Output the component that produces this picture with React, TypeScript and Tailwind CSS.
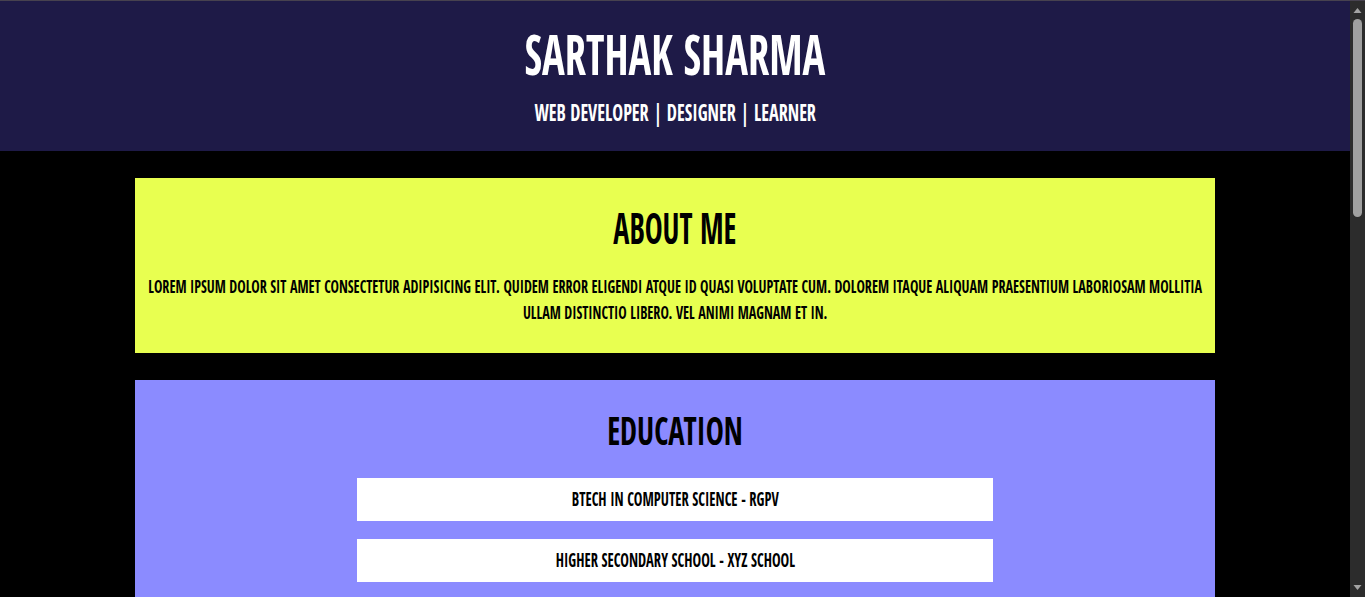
function Heading({ children, size, scale }: { children: string; size: string; scale: string }) {
  return (
    <h2 className={`${size} leading-none`}>
      <span className={`inline-block ${scale}`}>{children}</span>
    </h2>
  );
}

function Item({ children }: { children: string }) {
  return (
    <div className="mx-auto flex h-[43px] w-3/5 items-center justify-center bg-white text-[19px] leading-none">
      <span className="inline-block scale-x-[0.765]">{children}</span>
    </div>
  );
}

function Scrollbar() {
  return (
    <div className="flex w-[15px] shrink-0 flex-col items-center bg-[#2c2c2c]">
      <svg width="9" height="17" viewBox="0 0 9 17" className="shrink-0">
        <path d="M0.5 12 L4.5 7 L8.5 12 Z" fill="#a3a3a3" />
      </svg>
      <div className="mt-[1px] h-[198px] w-[9px] rounded-full bg-[#a0a0a0]" />
      <div className="flex-1" />
      <svg width="9" height="17" viewBox="0 0 9 17" className="shrink-0">
        <path d="M0.5 5 L4.5 10 L8.5 5 Z" fill="#a3a3a3" />
      </svg>
    </div>
  );
}

export default function App() {
  return (
    <div className="flex h-screen border-t border-[#47424f] bg-black font-['Open_Sans_Condensed','Open_Sans',sans-serif] font-bold">
      <div className="min-w-0 flex-1 overflow-y-auto [scrollbar-width:none]">
        <header className="bg-[#1e1a47] pt-[24px] pb-[27px] text-center text-white">
          <h1 className="text-[56px] leading-none">
            <span className="inline-block scale-x-[0.76]">SARTHAK SHARMA</span>
          </h1>
          <p className="mt-[20px] text-[23px] leading-none">
            <span className="inline-block scale-x-[0.79]">WEB DEVELOPER | DESIGNER | LEARNER</span>
          </p>
        </header>

        <main className="mx-auto flex w-4/5 flex-col gap-[27px] py-[27px] text-black">
          <section className="bg-[#e8ff50] px-[10px] pt-[28px] pb-[28px] text-center">
            <Heading size="text-[43px]" scale="scale-x-[0.7]">ABOUT ME</Heading>
            <div className="mt-[24px]">
              <p className="mx-[-13.69%] w-[127.39%] scale-x-[0.785] text-[18px] leading-[26px]">
                LOREM IPSUM DOLOR SIT AMET CONSECTETUR ADIPISICING ELIT. QUIDEM ERROR ELIGENDI ATQUE ID QUASI VOLUPTATE CUM. DOLOREM ITAQUE ALIQUAM PRAESENTIUM LABORIOSAM MOLLITIA ULLAM DISTINCTIO LIBERO. VEL ANIMI MAGNAM ET IN.
              </p>
            </div>
          </section>

          <section className="bg-[#8b8bff] px-[10px] pt-[30px] pb-[27px] text-center">
            <Heading size="text-[39px]" scale="scale-x-[0.78]">EDUCATION</Heading>
            <div className="mt-[29px] flex flex-col gap-[18px]">
              <Item>BTECH IN COMPUTER SCIENCE - RGPV</Item>
              <Item>HIGHER SECONDARY SCHOOL - XYZ SCHOOL</Item>
              <Item>SECONDARY SCHOOL - XYZ SCHOOL</Item>
            </div>
          </section>

          <section className="bg-[#ff8f8f] px-[10px] pt-[30px] pb-[27px] text-center">
            <Heading size="text-[39px]" scale="scale-x-[0.78]">SKILLS</Heading>
            <div className="mt-[29px] flex flex-col gap-[18px]">
              <Item>HTML &amp; CSS</Item>
              <Item>JAVASCRIPT</Item>
              <Item>REACT</Item>
              <Item>UI DESIGN</Item>
            </div>
          </section>

          <section className="bg-[#7dffb0] px-[10px] pt-[30px] pb-[27px] text-center">
            <Heading size="text-[39px]" scale="scale-x-[0.78]">PROJECTS</Heading>
            <div className="mt-[29px] flex flex-col gap-[18px]">
              <Item>PORTFOLIO WEBSITE</Item>
              <Item>TODO APP</Item>
              <Item>WEATHER APP</Item>
            </div>
          </section>

          <section className="bg-[#ffc46b] px-[10px] pt-[30px] pb-[27px] text-center">
            <Heading size="text-[39px]" scale="scale-x-[0.78]">CONTACT</Heading>
            <div className="mt-[29px] flex flex-col gap-[18px]">
              <Item>EMAIL - SARTHAK@EXAMPLE.COM</Item>
            </div>
          </section>
        </main>
      </div>
      <Scrollbar />
    </div>
  );
}
